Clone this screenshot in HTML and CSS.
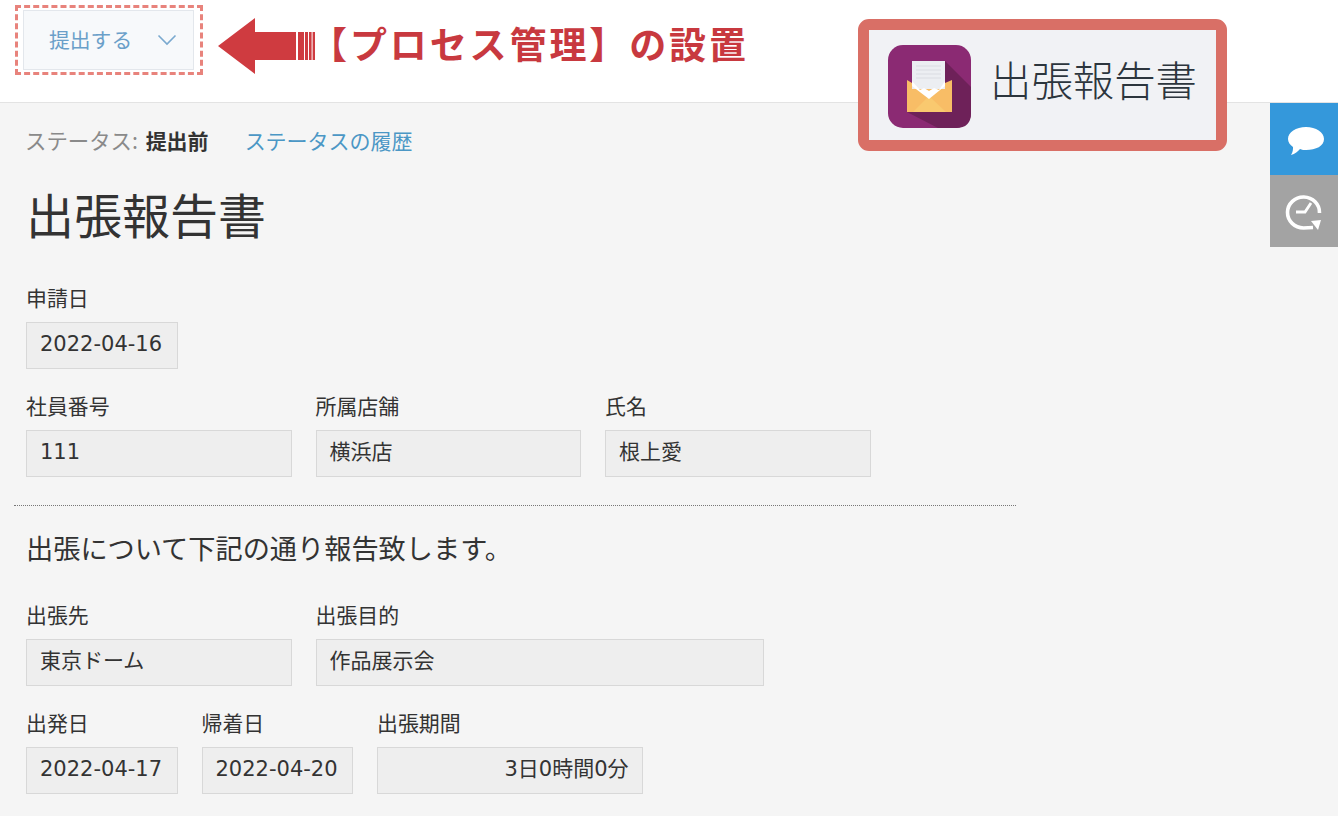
FILE: index.html
```html
<!DOCTYPE html>
<html lang="ja">
<head>
<meta charset="utf-8">
<title>出張報告書</title>
<link rel="stylesheet" href="styles.css">
</head>
<body>
<header class="toolbar">
  <div class="dash-box">
    <button class="submit-btn"><span>提出する</span>
      <svg class="chevron" width="20" height="12" viewBox="0 0 20 12"><path d="M1.5 1.5 L10 10 L18.5 1.5" fill="none" stroke="#7aa9cf" stroke-width="1.6"/></svg>
    </button>
  </div>
  <svg class="arrow" width="97" height="56" viewBox="0 0 97 56">
    <path d="M0 28 L37 0 V14 H78 V42 H37 V56 Z" fill="#cf3b40"/>
    <path d="M80 14h6v28h-6zM87 14h3v28h-3zM91 14h2.6v28h-2.6zM94.6 14h2.4v28h-2.4z" fill="#cf3b40"/>
  </svg>
  <div class="note">【プロセス管理】の設置</div>
</header>

<aside class="app-callout">
  <svg class="app-icon" width="83" height="83" viewBox="0 0 83 83">
    <rect width="83" height="83" rx="15" fill="#8b2a73"/>
    <path d="M57 16 L83 42 V68 Q83 83 68 83 H50 L19 67 Z" fill="#6e2159"/>
    <rect x="24" y="16" width="33" height="34" fill="#eceef2"/>
    <path d="M28 21h25M28 25h25M28 29h25M28 33h25" stroke="#dfe2e8" stroke-width="1.5"/>
    <path d="M19 35 L24 38 V44 H57 V38 L64 35 V67 H19 Z" fill="#f8bd66"/>
    <path d="M25 67 L41 51 L58 67 Z" fill="#f9c96f"/>
    <path d="M24 36 L32 45 L36 43 L41 46 L46 43 L51 45 L57 36 V41 L41 54 L24 41 Z" fill="#fff"/>
  </svg>
  <span class="app-name">出張報告書</span>
</aside>

<nav class="side">
  <div class="side-btn side-blue">
    <svg class="chat-icon" width="38" height="30" viewBox="0 0 38 30"><path d="M19 1 C29 1 37 6 37 13 C37 20 29 24 19 24 C17 24 15 24 13 23 C11 25 8 28 4 29 C6 26 6 23 6 21 C3 19 1 16 1 13 C1 6 9 1 19 1 Z" fill="#fff"/></svg>
  </div>
  <div class="side-btn side-gray">
    <svg width="38" height="38" viewBox="0 0 38 38"><path d="M34.5 21 A16 15.5 0 1 0 18.5 36 L28 35.5" fill="none" stroke="#fff" stroke-width="3.6"/><path d="M26 29 L36 28 L33 38 Z" fill="#fff"/><path d="M11 20 L20 20 L26 11" fill="none" stroke="#fff" stroke-width="2.8"/></svg>
  </div>
</nav>

<main class="content">
  <div class="status"><span class="status-label">ステータス:</span> <b class="status-value">提出前</b><a class="status-link">ステータスの履歴</a></div>
  <h1 class="title">出張報告書</h1>

  <div class="row row-first">
    <div class="field w-date"><label>申請日</label><div class="box">2022-04-16</div></div>
  </div>
  <div class="row">
    <div class="field w-265"><label>社員番号</label><div class="box">111</div></div>
    <div class="field w-265"><label>所属店舗</label><div class="box">横浜店</div></div>
    <div class="field w-265"><label>氏名</label><div class="box">根上愛</div></div>
  </div>
  <hr class="divider">
  <p class="lead">出張について下記の通り報告致します。</p>
  <div class="row">
    <div class="field w-265"><label>出張先</label><div class="box">東京ドーム</div></div>
    <div class="field w-448"><label>出張目的</label><div class="box">作品展示会</div></div>
  </div>
  <div class="row">
    <div class="field w-date"><label>出発日</label><div class="box">2022-04-17</div></div>
    <div class="field w-date"><label>帰着日</label><div class="box">2022-04-20</div></div>
    <div class="field w-265"><label>出張期間</label><div class="box box-right">3日0時間0分</div></div>
  </div>
</main>
</body>
</html>
```
FILE: styles.css
```css
* { box-sizing: border-box; }
html, body { margin: 0; padding: 0; }
body {
  width: 1338px;
  height: 816px;
  overflow: hidden;
  position: relative;
  background: #f5f5f5;
  color: #333;
  font-family: "Noto Sans CJK JP", "Noto Sans", sans-serif;
  font-size: 20px;
}
.toolbar {
  height: 103px;
  background: #fff;
  border-bottom: 1px solid #e3e3e3;
  display: flex;
  align-items: flex-start;
  padding: 5px 0 0 15px;
}
.dash-box {
  width: 188px;
  height: 70px;
  border: 3px dashed #e8837c;
  padding: 2px 5px;
}
.submit-btn {
  width: 171px;
  height: 60px;
  border: 1.5px solid #e3e7ec;
  background: #f7f9fb;
  color: #6a9fc9;
  font: 20.8px/1 "Noto Sans CJK JP", sans-serif;
  display: flex;
  align-items: center;
  justify-content: space-between;
  padding: 0 16px 2px 25px;
}
.chevron { flex: none; margin-top: 2px; }
.arrow { margin: 13px 0 0 15px; flex: none; }
.note {
  margin: 10px 0 0 -5px;
  color: #c8393f;
  font-size: 37px;
  line-height: 56px;
  font-weight: 700;
  letter-spacing: 2.9px;
  white-space: nowrap;
}
.app-callout {
  position: absolute;
  left: 858px;
  top: 19px;
  width: 369px;
  height: 132px;
  border: 11px solid #d96f66;
  border-radius: 11px;
  background: #f1f2f5;
  display: flex;
  align-items: center;
  padding: 2px 0 0 19px;
}
.app-icon { flex: none; }
.app-name {
  margin: -17px 0 0 19px;
  font-size: 41.4px;
  font-weight: 300;
  color: #2c353d;
  white-space: nowrap;
}
.side {
  position: absolute;
  right: 0;
  top: 103px;
  width: 68px;
}
.side-btn {
  height: 72px;
  display: flex;
  align-items: center;
  justify-content: center;
}
.chat-icon { margin: 4px 0 0 3px; }
.side-blue { background: #3498db; }
.side-gray { background: #a3a3a3; }
.content { padding: 22px 0 0 26px; }
.status { height: 30px; margin-left: -1px; line-height: 30px; font-size: 21px; white-space: nowrap; }
.status-label { color: #8a8a8a; font-size: 21.4px; }
.status-value { margin-left: 3px; font-weight: 700; color: #333; }
.status-link { margin-left: 36px; color: #4b97c5; }
.title {
  margin: 28px 0 0 0;
  font-size: 48px;
  line-height: 60px;
  font-weight: 400;
  color: #333;
}
.row { display: flex; gap: 24px; margin-top: 25.5px; }
.row-first { margin-top: 43px; }
.field label {
  display: block;
  height: 24px;
  line-height: 23px;
  margin: 0 0 12px 0;
  font-size: 20.9px;
  white-space: nowrap;
}
.box {
  height: 46.5px;
  line-height: 43px;
  padding: 0 13px;
  background: #eee;
  border: 1px solid #d8d8d8;
  font-family: "DejaVu Sans", "Noto Sans CJK JP", sans-serif;
  font-size: 21px;
  white-space: nowrap;
}
.box-right { text-align: right; }
.w-date { width: 151.5px; }
.w-265 { width: 265.5px; }
.w-448 { width: 448px; }
.divider {
  width: 1002px;
  height: 0;
  margin: 28.5px 0 0 -12px;
  border: 0;
  border-top: 1px dotted #777;
}
.lead {
  margin: 23px 0 38px 0;
  font-size: 27.2px;
  line-height: 36px;
  white-space: nowrap;
}
.lead + .row { margin-top: 0; }
```
